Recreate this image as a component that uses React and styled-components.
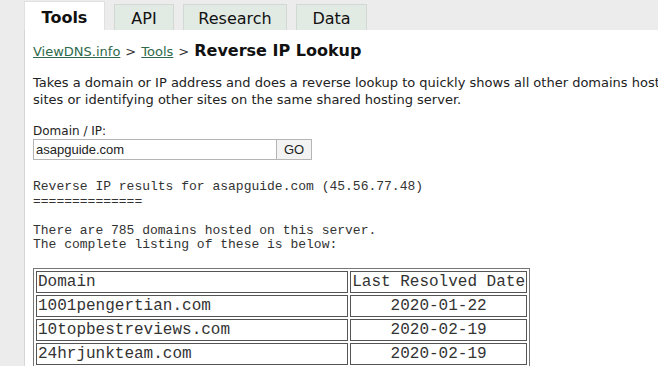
import React from 'react';
import styled, { createGlobalStyle } from 'styled-components';

const GlobalStyle = createGlobalStyle`
  html, body {
    margin: 0;
    padding: 0;
    background: #ececec;
    overflow: hidden;
  }
`;

const Page = styled.div`
  width: 658px;
  height: 366px;
  padding-left: 24px;
  box-sizing: border-box;
  font-family: "DejaVu Sans", Verdana, sans-serif;
  color: #222;
`;

const TabBar = styled.div`
  display: flex;
  align-items: flex-end;
  gap: 9px;
  height: 30px;
`;

const Tab = styled.div`
  box-sizing: border-box;
  height: ${p => (p.active ? '29px' : '26px')};
  width: ${p => p.w}px;
  display: flex;
  align-items: center;
  justify-content: center;
  font-size: 16px;
  font-weight: ${p => (p.active ? 700 : 400)};
  color: #111;
  background: ${p => (p.active ? '#fff' : '#e2eae4')};
  border: 1px solid ${p => (p.active ? '#e0e0e0' : '#d2d8d3')};
  border-bottom: none;
  padding-top: ${p => (p.active ? '2px' : '1px')};
`;

const Panel = styled.div`
  background: #fff;
  border-left: 1px solid #d6d6d6;
  height: 336px;
  padding: 11px 0 0 8px;
  box-sizing: border-box;
  overflow: hidden;
`;

const Crumbs = styled.div`
  display: flex;
  align-items: baseline;
  gap: 5px;
  font-size: 13px;
  color: #333;
  margin-bottom: 14px;
`;

const CrumbLink = styled.a`
  color: #2e6a4b;
  text-decoration: underline;
`;

const Title = styled.h1`
  margin: 0;
  font-size: 16px;
  font-weight: 700;
  color: #111;
`;

const Intro = styled.p`
  margin: 0 0 16px;
  font-size: 13px;
  line-height: 17px;
  white-space: nowrap;
  color: #222;
`;

const Label = styled.div`
  font-size: 12px;
  line-height: 15px;
  color: #222;
`;

const Form = styled.div`
  display: flex;
  margin-bottom: 20px;
`;

const Input = styled.div`
  box-sizing: border-box;
  width: 244px;
  height: 21px;
  border: 1px solid #b5b5b5;
  font-family: "Liberation Sans", Arial, sans-serif;
  font-size: 13px;
  line-height: 19px;
  padding-left: 2px;
  color: #222;
`;

const GoButton = styled.div`
  box-sizing: border-box;
  width: 35px;
  height: 21px;
  border: 1px solid #b5b5b5;
  border-left: none;
  background: #f3f3f3;
  font-family: "Liberation Sans", Arial, sans-serif;
  font-size: 13px;
  line-height: 19px;
  text-align: center;
  color: #222;
`;

const Pre = styled.pre`
  margin: 0 0 15px;
  font-family: "Liberation Mono", "Courier New", monospace;
  font-size: 13px;
  line-height: 14.5px;
  color: #333;
`;

const Table = styled.table`
  border: 1px solid #777;
  border-spacing: 2px;
  width: 497px;
  font-family: "Liberation Mono", "Courier New", monospace;
  font-size: 16px;
  color: #333;
`;

const Cell = styled.td`
  border: 1px solid #555;
  padding: 0 1px;
  height: 20px;
  line-height: 20px;
  white-space: nowrap;
  text-align: ${p => (p.center ? 'center' : 'left')};
  width: ${p => (p.w ? `${p.w}px` : 'auto')};
`;

const rows = [
  ['1001pengertian.com', '2020-01-22'],
  ['10topbestreviews.com', '2020-02-19'],
  ['24hrjunkteam.com', '2020-02-19'],
  ['2littlelambs.com', '2020-02-19'],
];

const App = () => (
  <Page>
    <GlobalStyle />
    <TabBar>
      <Tab active w={81}>Tools</Tab>
      <Tab w={60}>API</Tab>
      <Tab w={104}>Research</Tab>
      <Tab w={71}>Data</Tab>
    </TabBar>
    <Panel>
      <Crumbs>
        <CrumbLink href="#">ViewDNS.info</CrumbLink>
        <span>&gt;</span>
        <CrumbLink href="#">Tools</CrumbLink>
        <span>&gt;</span>
        <Title>Reverse IP Lookup</Title>
      </Crumbs>
      <Intro>
        Takes a domain or IP address and does a reverse lookup to quickly shows all other domains hosted on the same server. Useful for finding phishing
        <br />
        sites or identifying other sites on the same shared hosting server.
      </Intro>
      <Label>Domain / IP:</Label>
      <Form>
        <Input>asapguide.com</Input>
        <GoButton>GO</GoButton>
      </Form>
      <Pre>{`Reverse IP results for asapguide.com (45.56.77.48)
==============

There are 785 domains hosted on this server.
The complete listing of these is below:`}</Pre>
      <Table>
        <tbody>
          <tr>
            <Cell w={310}>Domain</Cell>
            <Cell>Last Resolved Date</Cell>
          </tr>
          {rows.map(([domain, date]) => (
            <tr key={domain}>
              <Cell>{domain}</Cell>
              <Cell center>{date}</Cell>
            </tr>
          ))}
        </tbody>
      </Table>
    </Panel>
  </Page>
);

export default App;
